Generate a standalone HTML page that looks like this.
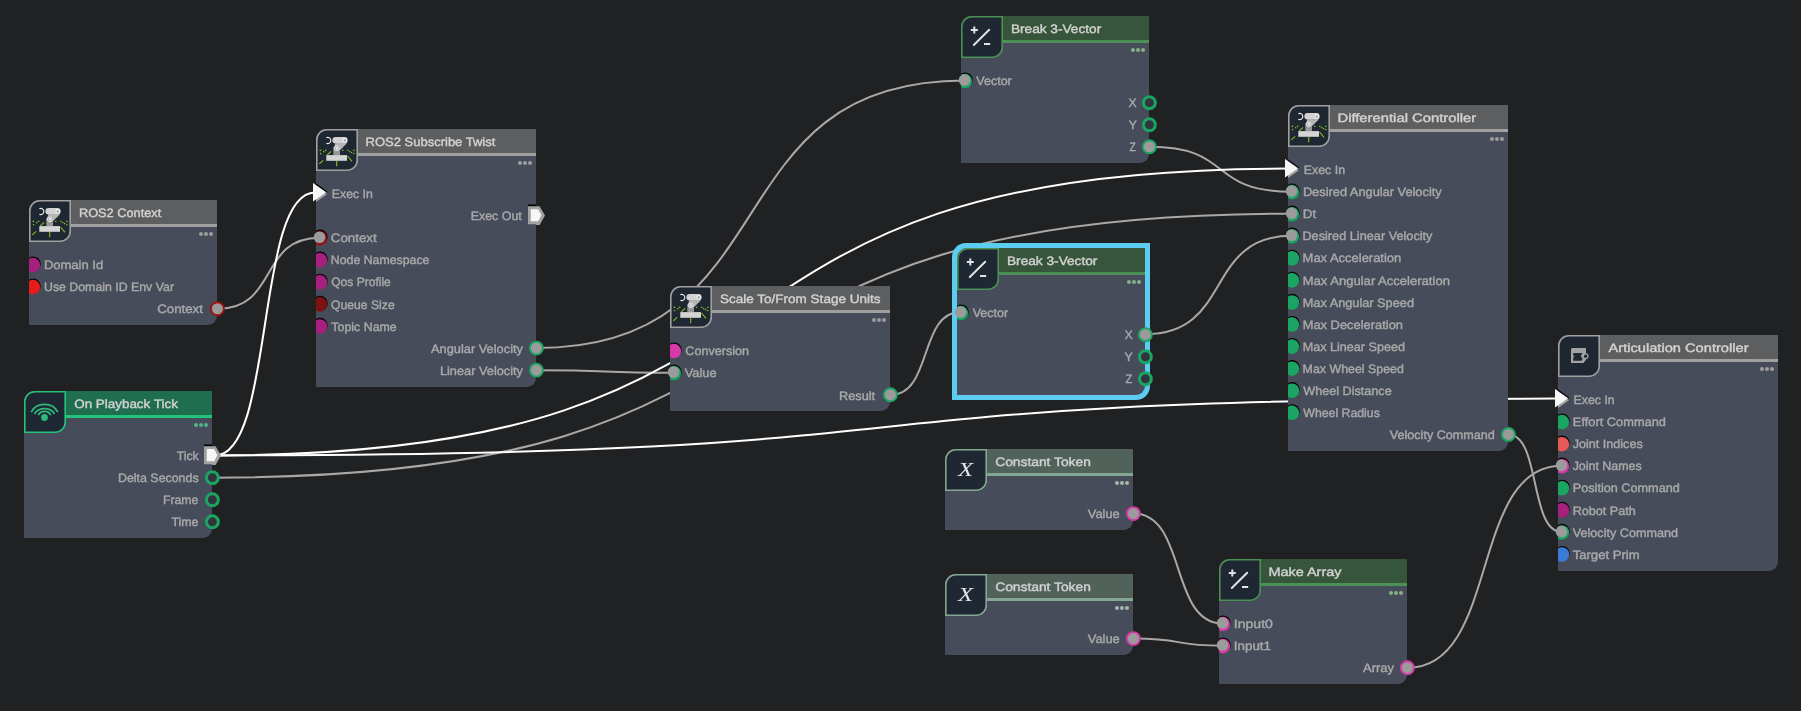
<!DOCTYPE html><html lang="en"><head><meta charset="utf-8"><title>Action Graph</title><style>
html,body{margin:0;padding:0;background:#202123;}
body{width:1801px;height:711px;position:relative;overflow:hidden;font-family:"Liberation Sans", sans-serif;font-size:12.2px;}
#wires{position:absolute;left:0;top:0;}
.node{position:absolute;will-change:transform;}
.body{position:absolute;left:0;top:0;right:0;bottom:0;background:#474c5b;border-radius:10px 0 9px 0;}
.hdr{position:absolute;left:10px;top:0;right:0;height:24px;}
.line{position:absolute;left:10px;top:24px;right:0;height:3px;}
.icon{position:absolute;left:0;top:0;width:42px;height:42px;}
.ic{position:absolute;left:0;top:0;}
.dots{position:absolute;right:4.3px;top:32.3px;width:14px;height:4.2px;}
.dots i{position:absolute;top:0;width:4.2px;height:4.2px;border-radius:50%;}
.dots i:nth-child(1){left:0} .dots i:nth-child(2){left:4.9px} .dots i:nth-child(3){left:9.8px}
.ports{position:absolute;left:0;top:0;overflow:visible;}
.lbl,.title{font-family:"Liberation Sans", sans-serif;font-size:12.2px;fill:#a9a9a9;stroke:#a9a9a9;stroke-width:0.4px;text-rendering:geometricPrecision;}
.title{fill:#d2d2d2;stroke:#d2d2d2;}
.sel{position:absolute;background:#5ccdf0;border-radius:14px 0 14px 0;}
.gray .hdr{background:#5d5e60} .gray .line{background:#a0a0a0} .gray .dots i{background:#9d9d9d}
.event .hdr{background:#1f6e50} .event .line{background:#22c47c} .event .dots i{background:#4fb58a}
.math .hdr{background:#36553b} .math .line{background:#4b9054} .math .dots i{background:#86b08a}
.const .hdr{background:#506259} .const .line{background:#84a793} .const .dots i{background:#a3b9ab}
</style></head><body>
<svg id="wires" width="1801" height="711" viewBox="0 0 1801 711"><path d="M217.40 308.74 C278.72 308.74 258.28 237.74 319.60 237.74" stroke="#a8a8a8" stroke-width="2.0" fill="none"/>
<path d="M212.40 477.67 C859.92 477.67 644.08 213.74 1291.60 213.74" stroke="#a8a8a8" stroke-width="2.0" fill="none"/>
<path d="M536.40 348.09 C793.32 348.09 707.68 80.60 964.60 80.60" stroke="#a8a8a8" stroke-width="2.0" fill="none"/>
<path d="M536.40 370.16 C618.72 370.16 591.28 372.87 673.60 372.87" stroke="#a8a8a8" stroke-width="2.0" fill="none"/>
<path d="M890.40 394.94 C932.64 394.94 918.56 312.10 960.80 312.10" stroke="#a8a8a8" stroke-width="2.0" fill="none"/>
<path d="M1149.40 146.81 C1234.72 146.81 1206.28 191.67 1291.60 191.67" stroke="#a8a8a8" stroke-width="2.0" fill="none"/>
<path d="M1145.60 334.17 C1233.20 334.17 1204.00 235.81 1291.60 235.81" stroke="#a8a8a8" stroke-width="2.0" fill="none"/>
<path d="M1508.40 434.44 C1540.32 434.44 1529.68 532.02 1561.60 532.02" stroke="#a8a8a8" stroke-width="2.0" fill="none"/>
<path d="M1133.40 513.60 C1187.10 513.60 1169.20 623.60 1222.90 623.60" stroke="#a8a8a8" stroke-width="2.0" fill="none"/>
<path d="M1133.40 638.60 C1187.10 638.60 1169.20 645.67 1222.90 645.67" stroke="#a8a8a8" stroke-width="2.0" fill="none"/>
<path d="M1407.70 667.74 C1500.04 667.74 1469.26 465.81 1561.60 465.81" stroke="#a8a8a8" stroke-width="2.0" fill="none"/>
<path d="M215.00 455.40 C275.00 455.40 255.00 192.60 315.00 192.60" stroke="#ffffff" stroke-width="2.0" fill="none"/>
<path d="M215.00 455.40 C858.20 455.40 643.80 168.60 1287.00 168.60" stroke="#ffffff" stroke-width="2.0" fill="none"/>
<path d="M215.00 455.40 C1020.20 455.40 751.80 398.60 1557.00 398.60" stroke="#ffffff" stroke-width="2.0" fill="none"/></svg>
<div class="node gray" id="ctx" style="left:29px;top:200px;width:188px;height:125.24px">
<div class="body"></div><div class="hdr"></div><div class="line"></div>
<div class="icon"><svg class="ic" width="42" height="42" viewBox="0 0 42 42"><path d="M0.8 41.2 V10.8 A10 10 0 0 1 10.8 0.8 H41.2 V31.2 A10 10 0 0 1 31.2 41.2 Z" fill="#1e2732" stroke="#a0a0a0" stroke-width="1.6"/><g transform="translate(0 -0.2)"><path d="M17.3 18.6 H24 V26.4 H17.3 Z" fill="#969696"/>
<path d="M19.4 14.4 L31 14.4 L24.2 21.3 L17.3 20 Z" fill="#b6b6b6"/>
<rect x="16.4" y="8.2" width="15.2" height="6.5" rx="3.2" fill="#d2d2d2"/>
<rect x="10.3" y="26.3" width="20.7" height="5.7" fill="#d4d4d4"/>
<circle cx="20.8" cy="19.6" r="2.3" fill="#8c8c8c" stroke="#ececec" stroke-width="1"/>
<rect x="19.7" y="18.5" width="2.2" height="2.2" fill="#f4f4f4"/>
<circle cx="28.8" cy="11.7" r="1.9" fill="#a0a0a0" stroke="#f6f6f6" stroke-width="1.1"/>
<path d="M10.4 8.9 A3.1 3.1 0 1 1 10.4 14.5" fill="none" stroke="#f2f2f2" stroke-width="1.1"/>
<g stroke="#86c51d" stroke-width="1.1" fill="none">
<path d="M3.2 35 L7.2 31.6 M11.3 26 L15.1 22.5 M31.5 27.2 L36 32.6 M20.7 32.3 L20.7 37.4"/>
</g>
<g fill="#86c51d"><rect x="3.5" y="20.9" width="1.7" height="1.2"/><rect x="7.1" y="22.2" width="1.3" height="1.3"/><rect x="9" y="20.9" width="1.3" height="1.3"/><rect x="3.9" y="24.1" width="1.3" height="1.3"/>
<rect x="26.1" y="20.9" width="1.3" height="1.3"/><rect x="31.2" y="20.9" width="1.3" height="1.3"/><rect x="33.1" y="22.2" width="1.3" height="1.3"/><rect x="35" y="23.1" width="1.3" height="1.3"/><rect x="37.2" y="20.9" width="1.3" height="1.3"/><rect x="37.2" y="24.1" width="1.3" height="1.3"/></g></g></svg></div>
<div class="dots"><i></i><i></i><i></i></div>
<svg class="ports" width="188" height="125.24" viewBox="0 0 188 125.24"><defs><clipPath id="clipctx"><rect x="0" y="0" width="188" height="125.24"/></clipPath></defs><g clip-path="url(#clipctx)"><circle cx="4.2" cy="63.90" r="7.5" fill="#0b0508"/><circle cx="3.9" cy="65.05" r="7.3" fill="#a8207d"/></g><g clip-path="url(#clipctx)"><circle cx="4.2" cy="85.97" r="7.5" fill="#0b0508"/><circle cx="3.9" cy="87.12" r="7.3" fill="#e51c1c"/></g><circle cx="188.4" cy="108.74" r="6.50" fill="#9b9b9b" stroke="#9c1010" stroke-width="1.9"/>
<text class="title" x="49.98" y="16.85" textLength="82.25" lengthAdjust="spacingAndGlyphs">ROS2 Context</text>
<text class="lbl" x="14.88" y="68.85" textLength="59.28" lengthAdjust="spacingAndGlyphs">Domain Id</text>
<text class="lbl" x="15.00" y="90.85" textLength="130.00" lengthAdjust="spacingAndGlyphs">Use Domain ID Env Var</text>
<text class="lbl" x="128.19" y="112.85" textLength="45.75" lengthAdjust="spacingAndGlyphs">Context</text></svg>
</div>
<div class="node gray" id="sub" style="left:316px;top:129px;width:220px;height:257.66px">
<div class="body"></div><div class="hdr"></div><div class="line"></div>
<div class="icon"><svg class="ic" width="42" height="42" viewBox="0 0 42 42"><path d="M0.8 41.2 V10.8 A10 10 0 0 1 10.8 0.8 H41.2 V31.2 A10 10 0 0 1 31.2 41.2 Z" fill="#1e2732" stroke="#a0a0a0" stroke-width="1.6"/><g transform="translate(0 -0.2)"><path d="M17.3 18.6 H24 V26.4 H17.3 Z" fill="#969696"/>
<path d="M19.4 14.4 L31 14.4 L24.2 21.3 L17.3 20 Z" fill="#b6b6b6"/>
<rect x="16.4" y="8.2" width="15.2" height="6.5" rx="3.2" fill="#d2d2d2"/>
<rect x="10.3" y="26.3" width="20.7" height="5.7" fill="#d4d4d4"/>
<circle cx="20.8" cy="19.6" r="2.3" fill="#8c8c8c" stroke="#ececec" stroke-width="1"/>
<rect x="19.7" y="18.5" width="2.2" height="2.2" fill="#f4f4f4"/>
<circle cx="28.8" cy="11.7" r="1.9" fill="#a0a0a0" stroke="#f6f6f6" stroke-width="1.1"/>
<path d="M10.4 8.9 A3.1 3.1 0 1 1 10.4 14.5" fill="none" stroke="#f2f2f2" stroke-width="1.1"/>
<g stroke="#86c51d" stroke-width="1.1" fill="none">
<path d="M3.2 35 L7.2 31.6 M11.3 26 L15.1 22.5 M31.5 27.2 L36 32.6 M20.7 32.3 L20.7 37.4"/>
</g>
<g fill="#86c51d"><rect x="3.5" y="20.9" width="1.7" height="1.2"/><rect x="7.1" y="22.2" width="1.3" height="1.3"/><rect x="9" y="20.9" width="1.3" height="1.3"/><rect x="3.9" y="24.1" width="1.3" height="1.3"/>
<rect x="26.1" y="20.9" width="1.3" height="1.3"/><rect x="31.2" y="20.9" width="1.3" height="1.3"/><rect x="33.1" y="22.2" width="1.3" height="1.3"/><rect x="35" y="23.1" width="1.3" height="1.3"/><rect x="37.2" y="20.9" width="1.3" height="1.3"/><rect x="37.2" y="24.1" width="1.3" height="1.3"/></g></g></svg></div>
<div class="dots"><i></i><i></i><i></i></div>
<svg class="ports" width="220" height="257.66" viewBox="0 0 220 257.66"><defs><clipPath id="clipsub"><rect x="0" y="0" width="220" height="257.66"/></clipPath></defs><g clip-path="url(#clipsub)"><path d="M-2 52.90 L11.4 62.50 L-2 71.30 Z" fill="#08080a"/><path d="M-2.2 56.90 L11 65.20 L-2.2 74.70 Z" fill="#a4a4a4"/></g><path d="M-3 54.10 L10.2 63.30 L-3 72.50 Z" fill="#f6f6f6"/><g clip-path="url(#clipsub)"><rect x="212" y="75.47" width="12" height="4" fill="#08080a"/></g><path d="M212 77.27 H223.6 L229 86.57 L223.6 96.07 H220 V95.27 H212 Z" fill="#a2a2a2"/><path d="M214.8 80.17 H222.2 L225.4 86.27 L222.2 92.37 H214.8 Z" fill="#f6f6f6"/><g clip-path="url(#clipsub)"><circle cx="4.2" cy="108.04" r="7.5" fill="#0b0508"/><circle cx="3.9" cy="109.19" r="7.3" fill="#9c1010"/></g><circle cx="3.5" cy="108.29" r="5.8" fill="#9b9b9b"/><g clip-path="url(#clipsub)"><circle cx="4.2" cy="130.11" r="7.5" fill="#0b0508"/><circle cx="3.9" cy="131.26" r="7.3" fill="#a8207d"/></g><g clip-path="url(#clipsub)"><circle cx="4.2" cy="152.18" r="7.5" fill="#0b0508"/><circle cx="3.9" cy="153.33" r="7.3" fill="#a8207d"/></g><g clip-path="url(#clipsub)"><circle cx="4.2" cy="174.25" r="7.5" fill="#0b0508"/><circle cx="3.9" cy="175.40" r="7.3" fill="#7d1010"/></g><g clip-path="url(#clipsub)"><circle cx="4.2" cy="196.32" r="7.5" fill="#0b0508"/><circle cx="3.9" cy="197.47" r="7.3" fill="#a8207d"/></g><circle cx="220.4" cy="219.09" r="6.50" fill="#9b9b9b" stroke="#1aa562" stroke-width="1.9"/><circle cx="220.4" cy="241.16" r="6.50" fill="#9b9b9b" stroke="#1aa562" stroke-width="1.9"/>
<text class="title" x="49.49" y="16.85" textLength="129.87" lengthAdjust="spacingAndGlyphs">ROS2 Subscribe Twist</text>
<text class="lbl" x="15.80" y="68.85" textLength="40.96" lengthAdjust="spacingAndGlyphs">Exec In</text>
<text class="lbl" x="154.66" y="90.85" textLength="51.15" lengthAdjust="spacingAndGlyphs">Exec Out</text>
<text class="lbl" x="14.77" y="112.85" textLength="46.00" lengthAdjust="spacingAndGlyphs">Context</text>
<text class="lbl" x="14.81" y="134.85" textLength="98.63" lengthAdjust="spacingAndGlyphs">Node Namespace</text>
<text class="lbl" x="15.16" y="156.85" textLength="59.67" lengthAdjust="spacingAndGlyphs">Qos Profile</text>
<text class="lbl" x="15.12" y="179.85" textLength="63.56" lengthAdjust="spacingAndGlyphs">Queue Size</text>
<text class="lbl" x="15.33" y="201.85" textLength="65.44" lengthAdjust="spacingAndGlyphs">Topic Name</text>
<text class="lbl" x="114.93" y="223.85" textLength="92.11" lengthAdjust="spacingAndGlyphs">Angular Velocity</text>
<text class="lbl" x="123.90" y="245.85" textLength="83.13" lengthAdjust="spacingAndGlyphs">Linear Velocity</text></svg>
</div>
<div class="node event" id="tick" style="left:24px;top:391px;width:188px;height:147.31px">
<div class="body"></div><div class="hdr"></div><div class="line"></div>
<div class="icon"><svg class="ic" width="42" height="42" viewBox="0 0 42 42"><path d="M0.8 41.2 V10.8 A10 10 0 0 1 10.8 0.8 H41.2 V31.2 A10 10 0 0 1 31.2 41.2 Z" fill="#1e2732" stroke="#22c47c" stroke-width="1.6"/><g transform="translate(0 1)"><circle cx="20.5" cy="25.5" r="3.4" fill="#2db97a"/>
<g fill="none" stroke="#2db97a" stroke-width="1.7"><path d="M14.20 23.20 A6.8 6.15 0 0 1 26.80 23.20"/><path d="M10.50 22.00 A10.9 8.9 0 0 1 30.50 22.00"/><path d="M7.20 20.10 A14.6 13.1 0 0 1 33.80 20.10"/></g></g></svg></div>
<div class="dots"><i></i><i></i><i></i></div>
<svg class="ports" width="188" height="147.31" viewBox="0 0 188 147.31"><defs><clipPath id="cliptick"><rect x="0" y="0" width="188" height="147.31"/></clipPath></defs><g clip-path="url(#cliptick)"><rect x="180" y="53.40" width="12" height="4" fill="#08080a"/></g><path d="M180 55.20 H191.6 L197 64.50 L191.6 74.00 H188 V73.20 H180 Z" fill="#a2a2a2"/><path d="M182.8 58.10 H190.2 L193.4 64.20 L190.2 70.30 H182.8 Z" fill="#f6f6f6"/><circle cx="188.4" cy="86.67" r="5.95" fill="#32353e" stroke="#1aa562" stroke-width="3.0"/><circle cx="188.4" cy="108.74" r="5.95" fill="#32353e" stroke="#1aa562" stroke-width="3.0"/><circle cx="188.4" cy="130.81" r="5.95" fill="#32353e" stroke="#1aa562" stroke-width="3.0"/>
<text class="title" x="50.19" y="16.85" textLength="103.67" lengthAdjust="spacingAndGlyphs">On Playback Tick</text>
<text class="lbl" x="152.83" y="68.85" textLength="21.85" lengthAdjust="spacingAndGlyphs">Tick</text>
<text class="lbl" x="93.98" y="90.85" textLength="80.67" lengthAdjust="spacingAndGlyphs">Delta Seconds</text>
<text class="lbl" x="138.94" y="112.85" textLength="35.50" lengthAdjust="spacingAndGlyphs">Frame</text>
<text class="lbl" x="147.44" y="134.85" textLength="26.92" lengthAdjust="spacingAndGlyphs">Time</text></svg>
</div>
<div class="node gray" id="scale" style="left:670px;top:286.2px;width:220px;height:125.24px">
<div class="body"></div><div class="hdr"></div><div class="line"></div>
<div class="icon"><svg class="ic" width="42" height="42" viewBox="0 0 42 42"><path d="M0.8 41.2 V10.8 A10 10 0 0 1 10.8 0.8 H41.2 V31.2 A10 10 0 0 1 31.2 41.2 Z" fill="#1e2732" stroke="#a0a0a0" stroke-width="1.6"/><g transform="translate(0 -0.2)"><path d="M17.3 18.6 H24 V26.4 H17.3 Z" fill="#969696"/>
<path d="M19.4 14.4 L31 14.4 L24.2 21.3 L17.3 20 Z" fill="#b6b6b6"/>
<rect x="16.4" y="8.2" width="15.2" height="6.5" rx="3.2" fill="#d2d2d2"/>
<rect x="10.3" y="26.3" width="20.7" height="5.7" fill="#d4d4d4"/>
<circle cx="20.8" cy="19.6" r="2.3" fill="#8c8c8c" stroke="#ececec" stroke-width="1"/>
<rect x="19.7" y="18.5" width="2.2" height="2.2" fill="#f4f4f4"/>
<circle cx="28.8" cy="11.7" r="1.9" fill="#a0a0a0" stroke="#f6f6f6" stroke-width="1.1"/>
<path d="M10.4 8.9 A3.1 3.1 0 1 1 10.4 14.5" fill="none" stroke="#f2f2f2" stroke-width="1.1"/>
<g stroke="#86c51d" stroke-width="1.1" fill="none">
<path d="M3.2 35 L7.2 31.6 M11.3 26 L15.1 22.5 M31.5 27.2 L36 32.6 M20.7 32.3 L20.7 37.4"/>
</g>
<g fill="#86c51d"><rect x="3.5" y="20.9" width="1.7" height="1.2"/><rect x="7.1" y="22.2" width="1.3" height="1.3"/><rect x="9" y="20.9" width="1.3" height="1.3"/><rect x="3.9" y="24.1" width="1.3" height="1.3"/>
<rect x="26.1" y="20.9" width="1.3" height="1.3"/><rect x="31.2" y="20.9" width="1.3" height="1.3"/><rect x="33.1" y="22.2" width="1.3" height="1.3"/><rect x="35" y="23.1" width="1.3" height="1.3"/><rect x="37.2" y="20.9" width="1.3" height="1.3"/><rect x="37.2" y="24.1" width="1.3" height="1.3"/></g></g></svg></div>
<div class="dots"><i></i><i></i><i></i></div>
<svg class="ports" width="220" height="125.24" viewBox="0 0 220 125.24"><defs><clipPath id="clipscale"><rect x="0" y="0" width="220" height="125.24"/></clipPath></defs><g clip-path="url(#clipscale)"><circle cx="4.2" cy="63.90" r="7.5" fill="#0b0508"/><circle cx="3.9" cy="65.05" r="7.3" fill="#d63aa8"/></g><g clip-path="url(#clipscale)"><circle cx="4.2" cy="85.97" r="7.5" fill="#0b0508"/><circle cx="3.9" cy="87.12" r="7.3" fill="#1aa562"/></g><circle cx="3.5" cy="86.22" r="5.8" fill="#9b9b9b"/><circle cx="220.4" cy="108.74" r="6.50" fill="#9b9b9b" stroke="#1aa562" stroke-width="1.9"/>
<text class="title" x="49.93" y="16.65" textLength="160.59" lengthAdjust="spacingAndGlyphs">Scale To/From Stage Units</text>
<text class="lbl" x="15.36" y="68.65" textLength="63.77" lengthAdjust="spacingAndGlyphs">Conversion</text>
<text class="lbl" x="14.63" y="90.65" textLength="31.91" lengthAdjust="spacingAndGlyphs">Value</text>
<text class="lbl" x="169.01" y="113.65" textLength="36.13" lengthAdjust="spacingAndGlyphs">Result</text></svg>
</div>
<div class="node math" id="brk1" style="left:961px;top:16px;width:188px;height:147.31px">
<div class="body"></div><div class="hdr"></div><div class="line"></div>
<div class="icon"><svg class="ic" width="42" height="42" viewBox="0 0 42 42"><path d="M0.8 41.2 V10.8 A10 10 0 0 1 10.8 0.8 H41.2 V31.2 A10 10 0 0 1 31.2 41.2 Z" fill="#1e2732" stroke="#4b9054" stroke-width="1.6"/><g transform="translate(0 0)"><g transform="translate(0 0)"><g stroke="#e2e2e2" stroke-width="2" stroke-linecap="round" fill="none">
<path d="M12.8 29 L28.2 13.8"/></g><g stroke="#e2e2e2" stroke-width="2" fill="none"><path d="M9.8 14 H16.8 M13.3 10.5 V17.5 M23 28 H29.2"/></g></g></g></svg></div>
<div class="dots"><i></i><i></i><i></i></div>
<svg class="ports" width="188" height="147.31" viewBox="0 0 188 147.31"><defs><clipPath id="clipbrk1"><rect x="0" y="0" width="188" height="147.31"/></clipPath></defs><g clip-path="url(#clipbrk1)"><circle cx="4.2" cy="63.90" r="7.5" fill="#0b0508"/><circle cx="3.9" cy="65.05" r="7.3" fill="#1aa562"/></g><circle cx="3.5" cy="64.15" r="5.8" fill="#9b9b9b"/><circle cx="188.4" cy="86.67" r="5.95" fill="#32353e" stroke="#1aa562" stroke-width="3.0"/><circle cx="188.4" cy="108.74" r="5.95" fill="#32353e" stroke="#1aa562" stroke-width="3.0"/><circle cx="188.4" cy="130.81" r="6.50" fill="#9b9b9b" stroke="#1aa562" stroke-width="1.9"/>
<text class="title" x="49.90" y="16.85" textLength="90.35" lengthAdjust="spacingAndGlyphs">Break 3-Vector</text>
<text class="lbl" x="15.36" y="68.85" textLength="35.42" lengthAdjust="spacingAndGlyphs">Vector</text>
<text class="lbl" x="167.40" y="90.85" textLength="8.10" lengthAdjust="spacingAndGlyphs">X</text>
<text class="lbl" x="167.70" y="112.85" textLength="8.11" lengthAdjust="spacingAndGlyphs">Y</text>
<text class="lbl" x="168.50" y="134.85" textLength="6.29" lengthAdjust="spacingAndGlyphs">Z</text></svg>
</div>
<div class="sel" style="left:952.40px;top:242.90px;width:198.10px;height:156.61px"></div>
<div class="node math" id="brk2" style="left:957.2px;top:247.5px;width:188px;height:147.31px">
<div class="body"></div><div class="hdr"></div><div class="line"></div>
<div class="icon"><svg class="ic" width="42" height="42" viewBox="0 0 42 42"><path d="M0.8 41.2 V10.8 A10 10 0 0 1 10.8 0.8 H41.2 V31.2 A10 10 0 0 1 31.2 41.2 Z" fill="#1e2732" stroke="#4b9054" stroke-width="1.6"/><g transform="translate(0 0)"><g transform="translate(0 0)"><g stroke="#e2e2e2" stroke-width="2" stroke-linecap="round" fill="none">
<path d="M12.8 29 L28.2 13.8"/></g><g stroke="#e2e2e2" stroke-width="2" fill="none"><path d="M9.8 14 H16.8 M13.3 10.5 V17.5 M23 28 H29.2"/></g></g></g></svg></div>
<div class="dots"><i></i><i></i><i></i></div>
<svg class="ports" width="188" height="147.31" viewBox="0 0 188 147.31"><defs><clipPath id="clipbrk2"><rect x="0" y="0" width="188" height="147.31"/></clipPath></defs><g clip-path="url(#clipbrk2)"><circle cx="4.2" cy="63.90" r="7.5" fill="#0b0508"/><circle cx="3.9" cy="65.05" r="7.3" fill="#1aa562"/></g><circle cx="3.5" cy="64.15" r="5.8" fill="#9b9b9b"/><circle cx="188.4" cy="86.67" r="6.50" fill="#9b9b9b" stroke="#1aa562" stroke-width="1.9"/><circle cx="188.4" cy="108.74" r="5.95" fill="#32353e" stroke="#1aa562" stroke-width="3.0"/><circle cx="188.4" cy="130.81" r="5.95" fill="#32353e" stroke="#1aa562" stroke-width="3.0"/>
<text class="title" x="49.99" y="17.35" textLength="90.44" lengthAdjust="spacingAndGlyphs">Break 3-Vector</text>
<text class="lbl" x="15.65" y="69.35" textLength="35.44" lengthAdjust="spacingAndGlyphs">Vector</text>
<text class="lbl" x="167.80" y="91.35" textLength="7.89" lengthAdjust="spacingAndGlyphs">X</text>
<text class="lbl" x="167.54" y="113.35" textLength="8.17" lengthAdjust="spacingAndGlyphs">Y</text>
<text class="lbl" x="168.40" y="135.35" textLength="6.71" lengthAdjust="spacingAndGlyphs">Z</text></svg>
</div>
<div class="node gray" id="diff" style="left:1288px;top:105px;width:220px;height:345.94px">
<div class="body"></div><div class="hdr"></div><div class="line"></div>
<div class="icon"><svg class="ic" width="42" height="42" viewBox="0 0 42 42"><path d="M0.8 41.2 V10.8 A10 10 0 0 1 10.8 0.8 H41.2 V31.2 A10 10 0 0 1 31.2 41.2 Z" fill="#1e2732" stroke="#a0a0a0" stroke-width="1.6"/><g transform="translate(0 -0.2)"><path d="M17.3 18.6 H24 V26.4 H17.3 Z" fill="#969696"/>
<path d="M19.4 14.4 L31 14.4 L24.2 21.3 L17.3 20 Z" fill="#b6b6b6"/>
<rect x="16.4" y="8.2" width="15.2" height="6.5" rx="3.2" fill="#d2d2d2"/>
<rect x="10.3" y="26.3" width="20.7" height="5.7" fill="#d4d4d4"/>
<circle cx="20.8" cy="19.6" r="2.3" fill="#8c8c8c" stroke="#ececec" stroke-width="1"/>
<rect x="19.7" y="18.5" width="2.2" height="2.2" fill="#f4f4f4"/>
<circle cx="28.8" cy="11.7" r="1.9" fill="#a0a0a0" stroke="#f6f6f6" stroke-width="1.1"/>
<path d="M10.4 8.9 A3.1 3.1 0 1 1 10.4 14.5" fill="none" stroke="#f2f2f2" stroke-width="1.1"/>
<g stroke="#86c51d" stroke-width="1.1" fill="none">
<path d="M3.2 35 L7.2 31.6 M11.3 26 L15.1 22.5 M31.5 27.2 L36 32.6 M20.7 32.3 L20.7 37.4"/>
</g>
<g fill="#86c51d"><rect x="3.5" y="20.9" width="1.7" height="1.2"/><rect x="7.1" y="22.2" width="1.3" height="1.3"/><rect x="9" y="20.9" width="1.3" height="1.3"/><rect x="3.9" y="24.1" width="1.3" height="1.3"/>
<rect x="26.1" y="20.9" width="1.3" height="1.3"/><rect x="31.2" y="20.9" width="1.3" height="1.3"/><rect x="33.1" y="22.2" width="1.3" height="1.3"/><rect x="35" y="23.1" width="1.3" height="1.3"/><rect x="37.2" y="20.9" width="1.3" height="1.3"/><rect x="37.2" y="24.1" width="1.3" height="1.3"/></g></g></svg></div>
<div class="dots"><i></i><i></i><i></i></div>
<svg class="ports" width="220" height="345.94" viewBox="0 0 220 345.94"><defs><clipPath id="clipdiff"><rect x="0" y="0" width="220" height="345.94"/></clipPath></defs><g clip-path="url(#clipdiff)"><path d="M-2 52.90 L11.4 62.50 L-2 71.30 Z" fill="#08080a"/><path d="M-2.2 56.90 L11 65.20 L-2.2 74.70 Z" fill="#a4a4a4"/></g><path d="M-3 54.10 L10.2 63.30 L-3 72.50 Z" fill="#f6f6f6"/><g clip-path="url(#clipdiff)"><circle cx="4.2" cy="85.97" r="7.5" fill="#0b0508"/><circle cx="3.9" cy="87.12" r="7.3" fill="#1aa562"/></g><circle cx="3.5" cy="86.22" r="5.8" fill="#9b9b9b"/><g clip-path="url(#clipdiff)"><circle cx="4.2" cy="108.04" r="7.5" fill="#0b0508"/><circle cx="3.9" cy="109.19" r="7.3" fill="#1aa562"/></g><circle cx="3.5" cy="108.29" r="5.8" fill="#9b9b9b"/><g clip-path="url(#clipdiff)"><circle cx="4.2" cy="130.11" r="7.5" fill="#0b0508"/><circle cx="3.9" cy="131.26" r="7.3" fill="#1aa562"/></g><circle cx="3.5" cy="130.36" r="5.8" fill="#9b9b9b"/><g clip-path="url(#clipdiff)"><circle cx="4.2" cy="152.18" r="7.5" fill="#0b0508"/><circle cx="3.9" cy="153.33" r="7.3" fill="#1aa562"/></g><g clip-path="url(#clipdiff)"><circle cx="4.2" cy="174.25" r="7.5" fill="#0b0508"/><circle cx="3.9" cy="175.40" r="7.3" fill="#1aa562"/></g><g clip-path="url(#clipdiff)"><circle cx="4.2" cy="196.32" r="7.5" fill="#0b0508"/><circle cx="3.9" cy="197.47" r="7.3" fill="#1aa562"/></g><g clip-path="url(#clipdiff)"><circle cx="4.2" cy="218.39" r="7.5" fill="#0b0508"/><circle cx="3.9" cy="219.54" r="7.3" fill="#1aa562"/></g><g clip-path="url(#clipdiff)"><circle cx="4.2" cy="240.46" r="7.5" fill="#0b0508"/><circle cx="3.9" cy="241.61" r="7.3" fill="#1aa562"/></g><g clip-path="url(#clipdiff)"><circle cx="4.2" cy="262.53" r="7.5" fill="#0b0508"/><circle cx="3.9" cy="263.68" r="7.3" fill="#1aa562"/></g><g clip-path="url(#clipdiff)"><circle cx="4.2" cy="284.60" r="7.5" fill="#0b0508"/><circle cx="3.9" cy="285.75" r="7.3" fill="#1aa562"/></g><g clip-path="url(#clipdiff)"><circle cx="4.2" cy="306.67" r="7.5" fill="#0b0508"/><circle cx="3.9" cy="307.82" r="7.3" fill="#1aa562"/></g><circle cx="220.4" cy="329.44" r="6.50" fill="#9b9b9b" stroke="#1aa562" stroke-width="1.9"/>
<text class="title" x="49.45" y="16.85" textLength="138.80" lengthAdjust="spacingAndGlyphs">Differential Controller</text>
<text class="lbl" x="15.72" y="68.85" textLength="41.32" lengthAdjust="spacingAndGlyphs">Exec In</text>
<text class="lbl" x="14.88" y="90.85" textLength="138.82" lengthAdjust="spacingAndGlyphs">Desired Angular Velocity</text>
<text class="lbl" x="14.78" y="112.85" textLength="13.41" lengthAdjust="spacingAndGlyphs">Dt</text>
<text class="lbl" x="14.44" y="134.85" textLength="130.05" lengthAdjust="spacingAndGlyphs">Desired Linear Velocity</text>
<text class="lbl" x="14.60" y="156.85" textLength="98.65" lengthAdjust="spacingAndGlyphs">Max Acceleration</text>
<text class="lbl" x="14.72" y="179.85" textLength="147.19" lengthAdjust="spacingAndGlyphs">Max Angular Acceleration</text>
<text class="lbl" x="14.72" y="201.85" textLength="111.26" lengthAdjust="spacingAndGlyphs">Max Angular Speed</text>
<text class="lbl" x="14.65" y="223.85" textLength="100.41" lengthAdjust="spacingAndGlyphs">Max Deceleration</text>
<text class="lbl" x="14.68" y="245.85" textLength="102.29" lengthAdjust="spacingAndGlyphs">Max Linear Speed</text>
<text class="lbl" x="14.62" y="267.85" textLength="101.23" lengthAdjust="spacingAndGlyphs">Max Wheel Speed</text>
<text class="lbl" x="15.32" y="289.85" textLength="88.39" lengthAdjust="spacingAndGlyphs">Wheel Distance</text>
<text class="lbl" x="15.35" y="311.85" textLength="76.47" lengthAdjust="spacingAndGlyphs">Wheel Radius</text>
<text class="lbl" x="101.79" y="333.85" textLength="105.11" lengthAdjust="spacingAndGlyphs">Velocity Command</text></svg>
</div>
<div class="node gray" id="art" style="left:1558px;top:335px;width:220px;height:235.59px">
<div class="body"></div><div class="hdr"></div><div class="line"></div>
<div class="icon"><svg class="ic" width="42" height="42" viewBox="0 0 42 42"><path d="M0.8 41.2 V10.8 A10 10 0 0 1 10.8 0.8 H41.2 V31.2 A10 10 0 0 1 31.2 41.2 Z" fill="#1e2732" stroke="#a0a0a0" stroke-width="1.6"/><g transform="translate(0 1)"><g transform="translate(0 -1)"><path d="M13 14.5 A1.5 1.5 0 0 1 14.5 13 H28 V18.6 L30.6 21 L25.6 28 H13 Z" fill="#a2a2a2"/>
<path d="M15.2 18 H24.4 L22.8 21 L24.6 24 L23.6 25.8 H15.2 V22.6 L16.6 21.4 L15.2 20.4 Z" fill="#1e2732"/>
<circle cx="27.6" cy="21.2" r="2.3" fill="#1e2732" stroke="#a2a2a2" stroke-width="1.2"/></g></g></svg></div>
<div class="dots"><i></i><i></i><i></i></div>
<svg class="ports" width="220" height="235.59" viewBox="0 0 220 235.59"><defs><clipPath id="clipart"><rect x="0" y="0" width="220" height="235.59"/></clipPath></defs><g clip-path="url(#clipart)"><path d="M-2 52.90 L11.4 62.50 L-2 71.30 Z" fill="#08080a"/><path d="M-2.2 56.90 L11 65.20 L-2.2 74.70 Z" fill="#a4a4a4"/></g><path d="M-3 54.10 L10.2 63.30 L-3 72.50 Z" fill="#f6f6f6"/><g clip-path="url(#clipart)"><circle cx="4.2" cy="85.97" r="7.5" fill="#0b0508"/><circle cx="3.9" cy="87.12" r="7.3" fill="#1aa562"/></g><g clip-path="url(#clipart)"><circle cx="4.2" cy="108.04" r="7.5" fill="#0b0508"/><circle cx="3.9" cy="109.19" r="7.3" fill="#e85a5a"/></g><g clip-path="url(#clipart)"><circle cx="4.2" cy="130.11" r="7.5" fill="#0b0508"/><circle cx="3.9" cy="131.26" r="7.3" fill="#d63aa8"/></g><circle cx="3.5" cy="130.36" r="5.8" fill="#9b9b9b"/><g clip-path="url(#clipart)"><circle cx="4.2" cy="152.18" r="7.5" fill="#0b0508"/><circle cx="3.9" cy="153.33" r="7.3" fill="#1aa562"/></g><g clip-path="url(#clipart)"><circle cx="4.2" cy="174.25" r="7.5" fill="#0b0508"/><circle cx="3.9" cy="175.40" r="7.3" fill="#a8207d"/></g><g clip-path="url(#clipart)"><circle cx="4.2" cy="196.32" r="7.5" fill="#0b0508"/><circle cx="3.9" cy="197.47" r="7.3" fill="#1aa562"/></g><circle cx="3.5" cy="196.57" r="5.8" fill="#9b9b9b"/><g clip-path="url(#clipart)"><circle cx="4.2" cy="218.39" r="7.5" fill="#0b0508"/><circle cx="3.9" cy="219.54" r="7.3" fill="#3a7bd5"/></g>
<text class="title" x="50.47" y="16.85" textLength="140.11" lengthAdjust="spacingAndGlyphs">Articulation Controller</text>
<text class="lbl" x="15.50" y="68.85" textLength="41.21" lengthAdjust="spacingAndGlyphs">Exec In</text>
<text class="lbl" x="14.86" y="90.85" textLength="93.10" lengthAdjust="spacingAndGlyphs">Effort Command</text>
<text class="lbl" x="14.71" y="112.85" textLength="70.02" lengthAdjust="spacingAndGlyphs">Joint Indices</text>
<text class="lbl" x="14.64" y="134.85" textLength="68.98" lengthAdjust="spacingAndGlyphs">Joint Names</text>
<text class="lbl" x="14.73" y="156.85" textLength="107.11" lengthAdjust="spacingAndGlyphs">Position Command</text>
<text class="lbl" x="14.64" y="179.85" textLength="63.24" lengthAdjust="spacingAndGlyphs">Robot Path</text>
<text class="lbl" x="14.79" y="201.85" textLength="105.18" lengthAdjust="spacingAndGlyphs">Velocity Command</text>
<text class="lbl" x="14.64" y="223.85" textLength="67.08" lengthAdjust="spacingAndGlyphs">Target Prim</text></svg>
</div>
<div class="node const" id="tok1" style="left:945px;top:449px;width:188px;height:81.10px">
<div class="body"></div><div class="hdr"></div><div class="line"></div>
<div class="icon"><svg class="ic" width="42" height="42" viewBox="0 0 42 42"><path d="M0.8 41.2 V10.8 A10 10 0 0 1 10.8 0.8 H41.2 V31.2 A10 10 0 0 1 31.2 41.2 Z" fill="#1e2732" stroke="#84a793" stroke-width="1.6"/><g transform="translate(0 1)"><text transform="translate(20.6 26.3) scale(1.36 1)" x="0" y="0" text-anchor="middle" font-family="'Liberation Serif', 'DejaVu Serif', serif" font-style="italic" font-size="18.2" fill="#e6e6e6">X</text></g></svg></div>
<div class="dots"><i></i><i></i><i></i></div>
<svg class="ports" width="188" height="81.10" viewBox="0 0 188 81.10"><defs><clipPath id="cliptok1"><rect x="0" y="0" width="188" height="81.10"/></clipPath></defs><circle cx="188.4" cy="64.60" r="6.50" fill="#9b9b9b" stroke="#d63aa8" stroke-width="1.9"/>
<text class="title" x="50.17" y="16.85" textLength="95.69" lengthAdjust="spacingAndGlyphs">Constant Token</text>
<text class="lbl" x="142.76" y="68.85" textLength="31.98" lengthAdjust="spacingAndGlyphs">Value</text></svg>
</div>
<div class="node const" id="tok2" style="left:945px;top:574px;width:188px;height:81.10px">
<div class="body"></div><div class="hdr"></div><div class="line"></div>
<div class="icon"><svg class="ic" width="42" height="42" viewBox="0 0 42 42"><path d="M0.8 41.2 V10.8 A10 10 0 0 1 10.8 0.8 H41.2 V31.2 A10 10 0 0 1 31.2 41.2 Z" fill="#1e2732" stroke="#84a793" stroke-width="1.6"/><g transform="translate(0 1)"><text transform="translate(20.6 26.3) scale(1.36 1)" x="0" y="0" text-anchor="middle" font-family="'Liberation Serif', 'DejaVu Serif', serif" font-style="italic" font-size="18.2" fill="#e6e6e6">X</text></g></svg></div>
<div class="dots"><i></i><i></i><i></i></div>
<svg class="ports" width="188" height="81.10" viewBox="0 0 188 81.10"><defs><clipPath id="cliptok2"><rect x="0" y="0" width="188" height="81.10"/></clipPath></defs><circle cx="188.4" cy="64.60" r="6.50" fill="#9b9b9b" stroke="#d63aa8" stroke-width="1.9"/>
<text class="title" x="50.17" y="16.85" textLength="95.69" lengthAdjust="spacingAndGlyphs">Constant Token</text>
<text class="lbl" x="142.76" y="68.85" textLength="31.98" lengthAdjust="spacingAndGlyphs">Value</text></svg>
</div>
<div class="node math" id="arr" style="left:1219.3px;top:559px;width:188px;height:125.24px">
<div class="body"></div><div class="hdr"></div><div class="line"></div>
<div class="icon"><svg class="ic" width="42" height="42" viewBox="0 0 42 42"><path d="M0.8 41.2 V10.8 A10 10 0 0 1 10.8 0.8 H41.2 V31.2 A10 10 0 0 1 31.2 41.2 Z" fill="#1e2732" stroke="#4b9054" stroke-width="1.6"/><g transform="translate(0 0)"><g transform="translate(0 0)"><g stroke="#e2e2e2" stroke-width="2" stroke-linecap="round" fill="none">
<path d="M12.8 29 L28.2 13.8"/></g><g stroke="#e2e2e2" stroke-width="2" fill="none"><path d="M9.8 14 H16.8 M13.3 10.5 V17.5 M23 28 H29.2"/></g></g></g></svg></div>
<div class="dots"><i></i><i></i><i></i></div>
<svg class="ports" width="188" height="125.24" viewBox="0 0 188 125.24"><defs><clipPath id="cliparr"><rect x="0" y="0" width="188" height="125.24"/></clipPath></defs><g clip-path="url(#cliparr)"><circle cx="4.2" cy="63.90" r="7.5" fill="#0b0508"/><circle cx="3.9" cy="65.05" r="7.3" fill="#d63aa8"/></g><circle cx="3.5" cy="64.15" r="5.8" fill="#9b9b9b"/><g clip-path="url(#cliparr)"><circle cx="4.2" cy="85.97" r="7.5" fill="#0b0508"/><circle cx="3.9" cy="87.12" r="7.3" fill="#d63aa8"/></g><circle cx="3.5" cy="86.22" r="5.8" fill="#9b9b9b"/><circle cx="188.4" cy="108.74" r="6.50" fill="#9b9b9b" stroke="#d63aa8" stroke-width="1.9"/>
<text class="title" x="49.43" y="16.85" textLength="73.04" lengthAdjust="spacingAndGlyphs">Make Array</text>
<text class="lbl" x="14.74" y="68.85" textLength="39.16" lengthAdjust="spacingAndGlyphs">Input0</text>
<text class="lbl" x="14.82" y="90.85" textLength="37.17" lengthAdjust="spacingAndGlyphs">Input1</text>
<text class="lbl" x="143.98" y="112.85" textLength="31.13" lengthAdjust="spacingAndGlyphs">Array</text></svg>
</div>
</body></html>
